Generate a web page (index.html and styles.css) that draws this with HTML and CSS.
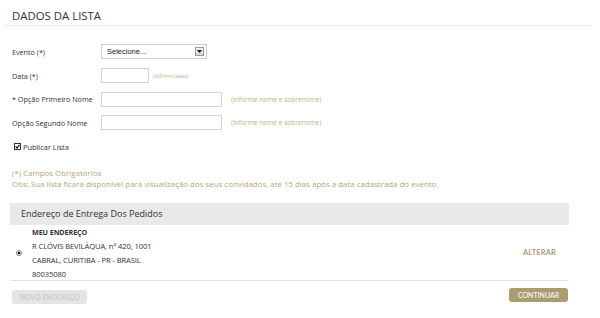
FILE: index.html
```html
<!DOCTYPE html>
<html lang="pt-BR">
<head>
<meta charset="utf-8">
<title>Dados da Lista</title>
<link rel="stylesheet" href="styles.css">
</head>
<body>
<div class="page">
  <div class="header"><h1 class="title">DADOS DA LISTA</h1></div>

  <div class="form">
    <div class="row">
      <label class="label">Evento (*)</label>
      <div class="select"><span class="select-text">Selecione...</span><span class="select-arrow"><svg width="5" height="3" viewBox="0 0 5 3"><path d="M0 0H5L2.5 3Z" fill="#111"/></svg></span></div>
    </div>
    <div class="row">
      <label class="label">Data (*)</label>
      <div class="input input-date"></div>
      <span class="hint hint-small">(dd/mm/aaaa)</span>
    </div>
    <div class="row">
      <label class="label">* Opção Primeiro Nome</label>
      <div class="input input-name"></div>
      <span class="hint">(Informe nome e sobrenome)</span>
    </div>
    <div class="row">
      <label class="label">Opção Segundo Nome</label>
      <div class="input input-name"></div>
      <span class="hint">(Informe nome e sobrenome)</span>
    </div>
    <div class="row row-check">
      <span class="checkbox"><svg width="7" height="7" viewBox="0 0 7 7"><rect x="0.5" y="0.5" width="6" height="6" fill="#fff" stroke="#333"/><path d="M1.6 3.4L3 5L5.5 1.8" fill="none" stroke="#111" stroke-width="1.2"/></svg></span>
      <span class="check-label">Publicar Lista</span>
    </div>
  </div>

  <div class="notes">
    <p>(*) Campos Obrigatórios</p>
    <p>Obs: Sua lista ficará disponível para visualização dos seus convidados, até 15 dias após a data cadastrada do evento.</p>
  </div>

  <div class="section">
    <div class="section-bar">Endereço de Entrega Dos Pedidos</div>
    <div class="address">
      <span class="radio"><svg width="6" height="6" viewBox="0 0 6 6"><circle cx="3" cy="3" r="2.5" fill="#fff" stroke="#666" stroke-width="0.8"/><circle cx="3" cy="3" r="1.3" fill="#111"/></svg></span>
      <div class="address-lines">
        <div class="address-name">MEU ENDEREÇO</div>
        <div>R CLÓVIS BEVILÁQUA, nº 420, 1001</div>
        <div>CABRAL, CURITIBA - PR - BRASIL</div>
        <div>80035080</div>
      </div>
      <a class="alterar">ALTERAR</a>
    </div>
    <div class="actions">
      <button class="btn btn-new">NOVO ENDEREÇO</button>
      <button class="btn btn-continue">CONTINUAR</button>
    </div>
  </div>
</div>
</body>
</html>
```

FILE: styles.css
```css
* { box-sizing: border-box; }
html, body { margin: 0; padding: 0; background: #fff; }
body { font-family: "Open Sans", "DejaVu Sans", sans-serif; color: #333; width: 600px; height: 318px; overflow: hidden; }

.page { padding-top: 8px; }

.header { margin: 0 8px 0 5px; border-bottom: 1px dotted #d8d8d8; height: 18px; }
.title { margin: 0; padding-left: 7px; font-weight: 400; font-size: 11.4px; line-height: 16px; color: #333; }

.form { padding: 14px 0 0 12px; }
.row { display: flex; align-items: center; height: 23.7px; }
.label { width: 89px; font-size: 7.2px; color: #333; flex: none; }

.select { display: flex; align-items: center; justify-content: space-between; width: 106px; height: 15px; border: 1px solid #cfcfcf; padding: 0 2px 0 5px; }
.select-text { font-family: "Liberation Sans", Arial, sans-serif; font-size: 7.5px; color: #222; }
.select-arrow { display: flex; align-items: center; justify-content: center; width: 9px; height: 9px; border: 1px solid #9a9a9a; background: linear-gradient(#f4f4f4, #d4d4d4); }

.input { height: 15px; border: 1px solid #d4d4d4; background: #fff; }
.input-date { width: 48px; }
.input-name { width: 121px; }

.hint { margin-left: 9px; font-size: 6.6px; color: #c1b28b; }
.hint-small { margin-left: 4px; font-size: 5.4px; }

.row-check { padding-left: 2px; }
.checkbox { display: flex; margin-right: 2px; }
.check-label { font-size: 7.4px; color: #333; }

.notes { padding: 10px 0 0 12px; color: #b7a67c; font-size: 7.9px; line-height: 11px; }
.notes p { margin: 0; }

.section { margin: 13px 31px 0 10px; }
.section-bar { background: #e9e9e9; height: 22px; line-height: 22px; padding-left: 11px; font-size: 9px; color: #333; }

.address { display: flex; align-items: center; border-bottom: 1px solid #e3e3e3; height: 56px; }
.radio { display: flex; margin: 0 10px 0 6px; }
.address-lines { flex: 1; font-size: 7.6px; line-height: 14px; color: #333; letter-spacing: -0.1px; }
.address-name { font-weight: 700; font-size: 7.2px; }
.alterar { margin-right: 13px; font-family: "Lato", "Open Sans", sans-serif; font-weight: 700; font-size: 7.4px; color: #a99b75; letter-spacing: 0.2px; }

.actions { display: flex; justify-content: space-between; align-items: flex-start; padding: 7px 1px 0 2px; }
.btn { border: none; border-radius: 3px; font-family: "Lato", "Open Sans", sans-serif; font-size: 7px; padding: 0; cursor: pointer; }
.btn-new { margin-top: 2px; width: 75px; height: 14px; background: #e4e4e4; color: #c4c4c4; }
.btn-continue { width: 59px; height: 14px; background: #ab9c6f; color: #fff; }
```
